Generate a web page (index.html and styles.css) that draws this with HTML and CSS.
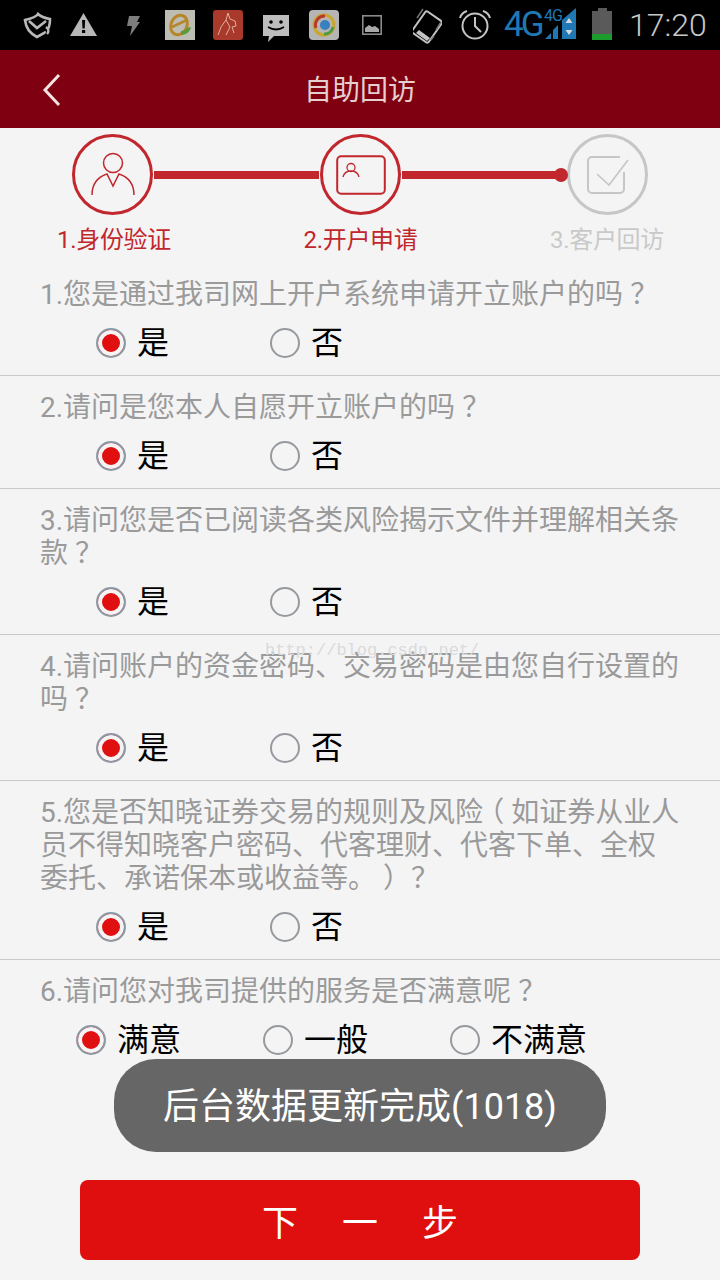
FILE: index.html
```html
<!DOCTYPE html>
<html lang="zh-CN">
<head>
<meta charset="utf-8">
<title>自助回访</title>
<link rel="stylesheet" href="styles.css">
</head>
<body>
<div class="page">
  <div class="status">
    <svg class="ic" width="32" height="50" viewBox="21 0 32 50"><path d="M25 20c8-2 12-4 13-6 2 2 6 4 12 5 0 6-1 10-4 13l-9 5c-7-4-11-8-12-17z" fill="none" stroke="#b9b9b9" stroke-width="2.6"/><path d="M29 21l8 7 9-7" fill="none" stroke="#b9b9b9" stroke-width="2.6"/><path d="M44 28c4 1 5 4 3 7" fill="none" stroke="#000" stroke-width="4"/><path d="M46 27c3 2 3 5 1 7" fill="none" stroke="#b9b9b9" stroke-width="2.4"/></svg>
    <svg class="ic m-warn" width="27" height="50" viewBox="70 0 27 50"><path d="M83.500 13L97 36H70z" fill="#b8b8b8"/><path d="M82 20h3.200l-.5 8.500h-2.200zM82 30h3.200v3H82z" fill="#000"/></svg>
    <svg class="ic m-bolt" width="15" height="50" viewBox="125 0 15 50"><path d="M129 16h11l-3 6h3l-10 14 2-10h-5z" fill="#7d7d7d"/></svg>
    <svg class="ic m-app" width="30" height="50" viewBox="165 0 30 50"><rect x="165" y="10" width="30" height="30" fill="#bdbdb4"/><ellipse cx="179" cy="25" rx="8" ry="10" transform="rotate(25 179 25)" fill="none" stroke="#b8862a" stroke-width="3"/><path d="M172 27l15-7" stroke="#b8862a" stroke-width="2.500"/><path d="M181 35c5 0 9-3 10-8l-4 1c-1 2-3 3-6 3z" fill="#5a9a3a"/></svg>
    <svg class="ic m-app2" width="30" height="50" viewBox="213 0 30 50"><rect x="213" y="10" width="30" height="30" rx="3" fill="#a9392a"/><path d="M228 13l-2 7-5 7-3 8M228 13l2 6 5 2 1 5-4 1 2 6M226 20l4 7-4 8" fill="none" stroke="#e0b0a0" stroke-width="1"/></svg>
    <svg class="ic m-chat" width="28" height="50" viewBox="262 0 28 50"><path d="M263 15h26v21h-15l-6 6 1-6h-6z" fill="#bdbdbd"/><circle cx="271" cy="22" r="1.800" fill="#000"/><circle cx="281" cy="22" r="1.800" fill="#000"/><path d="M268 27c5 3 11 3 16 0" fill="none" stroke="#000" stroke-width="2"/></svg>
    <svg class="ic m-app2" width="30" height="50" viewBox="309 0 30 50"><rect x="309" y="10" width="30" height="30" rx="4" fill="#b5b5b5"/><circle cx="324" cy="25" r="10" fill="none" stroke="#c9a62c" stroke-width="3"/><path d="M316 28a9 9 0 0 1 9-12" fill="none" stroke="#b8392a" stroke-width="3"/><path d="M324 34a9 9 0 0 0 9-7" fill="none" stroke="#4c9a48" stroke-width="3"/><circle cx="325" cy="25" r="5" fill="#3a7fc0"/></svg>
    <svg class="ic m-img" width="20" height="50" viewBox="362 0 20 50"><rect x="362.800" y="15.800" width="18.400" height="18.400" fill="none" stroke="#8a8a8a" stroke-width="1.600"/><path d="M365 32v-4l4-3 3 2 3-1 4 3v3z" fill="#a8a8a8"/></svg>
    <svg class="ic m-phone" width="29" height="50" viewBox="413 0 29 50"><rect x="417" y="14" width="20" height="26" rx="2" transform="rotate(35 427 27)" fill="none" stroke="#c4c4c4" stroke-width="2"/><path d="M416 33l11 8 3-3-11-8z" fill="#c4c4c4"/><path d="M423 9l-6 9M441 22l-5 8M434 36l-3 4" stroke="#777" stroke-width="1.500"/></svg>
    <svg class="ic m-alarm" width="32" height="50" viewBox="459 0 32 50"><circle cx="475" cy="26" r="12.500" fill="none" stroke="#c4c4c4" stroke-width="2"/><path d="M475 17v9l6 6" fill="none" stroke="#c4c4c4" stroke-width="2"/><path d="M460 18c1-4 4-6 7-7M490 18c-1-4-4-6-7-7" fill="none" stroke="#c4c4c4" stroke-width="2"/></svg>
    <span class="net">4G</span>
    <span class="net-sm">4G</span>
    <svg class="ic m-sig" width="34" height="50" viewBox="547 0 34 50"><path d="M548 39l6-6v6zM556 39v-9l5-5v14z" fill="#1f78b4"/><path d="M565 39V20L579 8v31z" fill="#1f78b4"/><path d="M572 18l3.500 5h-7zM572 35l3.500-5h-7z" fill="#d8d8d8"/></svg>
    <svg class="ic m-bat" width="21" height="50" viewBox="595 0 21 50"><path d="M601 8h9v3h5v29h-20V11h6z" fill="#5a5a5a"/><rect x="595" y="34" width="20" height="6" fill="#1c9c2c"/></svg>
    <span class="time">17:20</span>
  </div>

  <header class="bar">
    <svg class="back" width="20" height="34" viewBox="0 0 20 34"><path d="M17 2L3 17l14 15" fill="none" stroke="#f3e4e4" stroke-width="3"/></svg>
    <h1 class="title">自助回访</h1>
  </header>

  <section class="steps">
    <div class="track">
      <div class="circle">
        <svg width="46" height="46" viewBox="0 0 46 46"><circle cx="23" cy="11" r="9.500" fill="none" stroke="#c1272d" stroke-width="1.500"/><path d="M2 43c0-12 6-18 15-21l6 12 6-12c9 3 15 9 15 21" fill="none" stroke="#c1272d" stroke-width="1.500"/></svg>
      </div>
      <div class="line"></div>
      <div class="circle">
        <svg width="50" height="40" viewBox="0 0 50 40"><rect x="1.200" y="1.200" width="47.600" height="37.600" rx="4" fill="none" stroke="#c1272d" stroke-width="2"/><circle cx="15" cy="12.500" r="4" fill="none" stroke="#c1272d" stroke-width="1.300"/><path d="M7 22c1-4 4-6 8-6s7 2 8 6" fill="none" stroke="#c1272d" stroke-width="1.300"/></svg>
      </div>
      <div class="line line-end"></div>
      <div class="circle circle-off">
        <svg width="44" height="40" viewBox="0 0 44 40"><path d="M34 2H6a4 4 0 0 0-4 4v28a4 4 0 0 0 4 4h28a4 4 0 0 0 4-4V17" fill="none" stroke="#c6c6c6" stroke-width="2"/><path d="M11 19l12 11L42 5" fill="none" stroke="#c6c6c6" stroke-width="1.600"/></svg>
      </div>
    </div>
    <div class="labels">
      <span class="label">1.身份验证</span>
      <span class="label">2.开户申请</span>
      <span class="label label-off">3.客户回访</span>
    </div>
  </section>

  <main class="list">
    <div class="q">
      <p class="q-text">1.您是通过我司网上开户系统申请开立账户的吗<span class="mark">？</span></p>
      <div class="opts"><span class="opt"><i class="radio on"></i>是</span><span class="opt"><i class="radio"></i>否</span></div>
    </div>
    <div class="q">
      <p class="q-text">2.请问是您本人自愿开立账户的吗<span class="mark">？</span></p>
      <div class="opts"><span class="opt"><i class="radio on"></i>是</span><span class="opt"><i class="radio"></i>否</span></div>
    </div>
    <div class="q">
      <p class="q-text">3.请问您是否已阅读各类风险揭示文件并理解相关条款<span class="mark">？</span></p>
      <div class="opts"><span class="opt"><i class="radio on"></i>是</span><span class="opt"><i class="radio"></i>否</span></div>
    </div>
    <div class="q">
      <p class="q-text">4.请问账户的资金密码、交易密码是由您自行设置的吗<span class="mark">？</span></p>
      <div class="opts"><span class="opt"><i class="radio on"></i>是</span><span class="opt"><i class="radio"></i>否</span></div>
    </div>
    <div class="q">
      <p class="q-text">5.您是否知晓证券交易的规则及风险<span class="mark-open">（</span>如证券从业人员不得知晓客户密码、代客理财、代客下单、全权委托、承诺保本或收益等。<span class="mark">）</span><span class="mark">？</span></p>
      <div class="opts"><span class="opt"><i class="radio on"></i>是</span><span class="opt"><i class="radio"></i>否</span></div>
    </div>
    <div class="q q-last">
      <p class="q-text">6.请问您对我司提供的服务是否满意呢<span class="mark">？</span></p>
      <div class="opts opts-3"><span class="opt"><i class="radio on"></i>满意</span><span class="opt"><i class="radio"></i>一般</span><span class="opt"><i class="radio"></i>不满意</span></div>
    </div>
  </main>

  <footer class="foot">
    <button class="next"><span>下</span><span>一</span><span>步</span></button>
  </footer>

  <div class="watermark">http://blog.csdn.net/</div>
  <div class="toast">后台数据更新完成(1018)</div>
</div>
</body>
</html>
```
FILE: styles.css
```css
* { box-sizing: border-box; }
html, body { margin: 0; padding: 0; }
body { font-family: Roboto, "Noto Sans CJK SC", sans-serif; background: #f4f4f5; }
.page { position: relative; width: 720px; height: 1280px; overflow: hidden; display: flex; flex-direction: column; background: #f4f4f5; }

.status { height: 50px; background: #000; display: flex; align-items: center; padding-left: 21px; flex: none; }
.ic { display: block; flex: none; }
.m-warn { margin-left: 17px; }
.m-bolt { margin-left: 28px; }
.m-app { margin-left: 25px; }
.m-app2 { margin-left: 18px; }
.m-chat { margin-left: 19px; }
.m-img { margin-left: 23px; }
.m-phone { margin-left: 31px; }
.m-alarm { margin-left: 17px; }
.m-sig { margin-left: -18px; }
.m-bat { margin-left: 14px; }
.m-chat + .m-app2 { margin-left: 19px; }
.net { margin-left: 13px; width: 40px; font-size: 35px; line-height: 50px; letter-spacing: -3px; color: #1f78b4; font-weight: 400; }
.net-sm { width: 18px; font-size: 16px; line-height: 16px; letter-spacing: -1px; color: #1f78b4; align-self: flex-start; margin-top: 8px; }
.time { margin-left: 16px; font-size: 32px; font-weight: 300; line-height: 50px; color: #c8c8c8; }

.bar { height: 78px; flex: none; background: #7f0010; display: flex; align-items: center; justify-content: center; position: relative; }
.back { position: absolute; left: 42px; top: 23px; }
.title { margin: 0; padding-top: 4px; font-size: 28px; font-weight: 400; line-height: 74px; color: #e6cfcf; }

.steps { height: 135px; flex: none; padding-top: 6px; }
.track { display: flex; align-items: center; padding-left: 72px; }
.circle { width: 81px; height: 81px; border-radius: 50%; border: 3px solid #c1272d; display: flex; align-items: center; justify-content: center; flex: none; }
.circle-off { border-color: #c6c6c6; }
.line { width: 165px; height: 8px; background: #c1272d; margin: 0 1px; flex: none; position: relative; }
.line-end { width: 160px; margin-right: 5px; }
.line-end::after { content: ""; position: absolute; right: -6px; top: -3px; width: 14px; height: 14px; border-radius: 50%; background: #c1272d; }
.labels { display: flex; justify-content: space-between; padding: 9px 56px 0 57px; }
.label { font-size: 24px; line-height: 32px; letter-spacing: -0.3px; color: #c1272d; }
.label-off { color: #c9c9c9; }

.list { flex: 1; min-height: 0; overflow: hidden; }
.q { padding-top: 15px; padding-bottom: 7px; border-bottom: 1px solid #c9c9c9; }
.q-last { border-bottom: 0; }
.q-text { margin: 0; padding: 0 39px 0 40px; font-size: 28px; line-height: 33px; color: #9a9a9a; text-spacing-trim: space-all; }
.mark { padding-left: 7px; margin-right: -7px; }
.mark-open { margin-left: -7px; padding-right: 7px; }
.opts { display: grid; grid-template-columns: 174px 174px; padding-left: 96px; margin-top: 7px; height: 50px; align-items: center; }
.opts-3 { grid-template-columns: 187px 187px 187px; padding-left: 76px; }
.opt { display: flex; align-items: center; gap: 11px; font-size: 32px; line-height: 50px; color: #000; }
.radio { display: block; width: 30px; height: 30px; border-radius: 50%; border: 2px solid #969a9e; background: #f4f4f5; flex: none; }
.radio.on { background: #e01010; border-color: #8b9aa5; box-shadow: inset 0 0 0 4px #f4f4f5; }

.foot { flex: none; height: 100px; padding: 0 80px; }
.next { width: 560px; height: 80px; border: 0; border-radius: 8px; background: #e00f0f; color: #fff; font-family: inherit; font-size: 36px; display: flex; align-items: center; justify-content: center; gap: 44px; padding: 0; }

.watermark { position: absolute; left: 265px; top: 641px; font-family: "Liberation Mono", monospace; font-size: 17px; line-height: 20px; color: #dadada; }
.toast { position: absolute; left: 114px; top: 1059px; width: 492px; height: 93px; padding-top: 3px; border-radius: 42px; background: #666; color: #fff; font-size: 36px; line-height: 90px; text-align: center; }
```
